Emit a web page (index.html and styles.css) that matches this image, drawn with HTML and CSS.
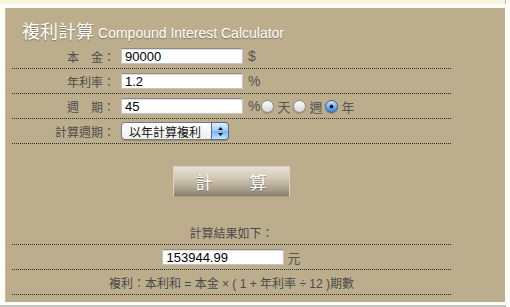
FILE: index.html
```html
<!doctype html>
<html lang="zh-Hant">
  <head>
    <meta charset="UTF-8" />
    <title>複利計算 Compound Interest Calculator</title>
    <link rel="stylesheet" href="styles.css">
  </head>
  <body>
    <div class="strip"></div>

    <div class="panel">
      <h1 class="title">複利計算 <span class="title-en">Compound Interest Calculator</span></h1>

      <div class="form">
        <div class="row">
          <label class="label" for="principal">本　金：</label>
          <div class="field">
            <input class="text" id="principal" type="text" value="90000" />
            <span class="unit">$</span>
          </div>
        </div>

        <div class="row">
          <label class="label" for="rate">年利率：</label>
          <div class="field">
            <input class="text" id="rate" type="text" value="1.2" />
            <span class="unit">%</span>
          </div>
        </div>

        <div class="row">
          <label class="label" for="period">週　期：</label>
          <div class="field">
            <input class="text" id="period" type="text" value="45" />
            <span class="unit">%</span>
            <span class="radios">
              <input class="radio" type="radio" name="unit" /><span class="opt">天</span>
              <input class="radio" type="radio" name="unit" /><span class="opt">週</span>
              <input class="radio" type="radio" name="unit" checked /><span class="opt">年</span>
            </span>
          </div>
        </div>

        <div class="row">
          <label class="label" for="mode">計算週期：</label>
          <div class="field">
            <div class="select">
              <select id="mode">
                <option>以年計算複利</option>
                <option>以月計算複利</option>
              </select>
              <span class="select-btn">
                <svg width="7" height="11" viewBox="0 0 7 11">
                  <path d="M3.5 1 L6 4 L1 4 Z" fill="#111" />
                  <path d="M3.5 10 L6 7 L1 7 Z" fill="#111" />
                </svg>
              </span>
            </div>
          </div>
        </div>

        <div class="actions">
          <button class="calc" type="button">計　　算</button>
        </div>

        <div class="row center">計算結果如下：</div>
        <div class="row center">
          <input class="text" type="text" value="153944.99" />
          <span class="unit">元</span>
        </div>
        <div class="row center">複利：本利和 = 本金 × ( 1 + 年利率 ÷ 12 )期數</div>
      </div>
    </div>

    <div class="foot"></div>
  </body>
</html>
```

FILE: styles.css
```css
* {
  margin: 0;
  padding: 0;
  box-sizing: border-box;
}

body {
  background: #fdfdf8;
  font-family: "Liberation Sans", "Noto Sans CJK TC", sans-serif;
  font-size: 12px;
  color: #4a4a4a;
  width: 510px;
}

.strip {
  width: 506px;
  height: 4px;
  background: #faf5dc;
  border-right: 1px solid #b8b8b8;
}

.panel {
  margin: 4px 0 0 5px;
  width: 500px;
  height: 294px;
  background: #bcad8c;
  padding: 0 6px;
  border-left: 1px solid #c9bd9f;
}

.title {
  height: 36px;
  padding: 10px 0 0 10px;
  font-family: "Noto Sans CJK TC", sans-serif;
  font-size: 18px;
  font-weight: normal;
  line-height: 24px;
  color: #fff;
  text-shadow: 0 1px 1px rgba(60, 50, 30, 0.45);
}

.title-en {
  font-family: "Liberation Sans", sans-serif;
  font-size: 14px;
}

.form {
  width: 439px;
}

.row {
  display: grid;
  grid-template-columns: 103px auto;
  align-items: center;
  height: 25px;
  border-bottom: 1px dotted #2a2a2a;
}

.label {
  font-family: "Noto Sans CJK TC", sans-serif;
  text-align: right;
  color: #4d4d4d;
}

.field {
  display: flex;
  align-items: center;
  padding-left: 6px;
}

.text {
  width: 122px;
  height: 16px;
  border: 1px solid #c4c4c4;
  border-top-color: #8a8a8a;
  box-shadow: inset 0 1px 1px rgba(0, 0, 0, 0.15);
  background: #fff;
  padding: 0 3px;
  font-family: "Liberation Sans", sans-serif;
  font-size: 13px;
  color: #000;
  outline: none;
}

.unit {
  margin-left: 5px;
  font-size: 14px;
  color: #555;
}

.radios {
  display: flex;
  align-items: center;
  margin-left: 1px;
}

.radio {
  appearance: none;
  width: 13px;
  height: 13px;
  border-radius: 50%;
  border: 1px solid #8a8a8a;
  background: linear-gradient(#ffffff, #d4d4d4);
  box-shadow: 0 1px 1px rgba(0, 0, 0, 0.2);
}

.radio:checked {
  border-color: #3a5f94;
  background:
    radial-gradient(circle, #1a1a1a 0 1.6px, transparent 2.2px),
    linear-gradient(#cfe6fb, #6aaef0 55%, #3a86dc);
}

.opt {
  margin: 0 3px 0 3px;
  font-family: "Noto Sans CJK TC", sans-serif;
  font-size: 13px;
  color: #555;
}

.select {
  position: relative;
  width: 108px;
  height: 18px;
}

.select select {
  appearance: none;
  width: 100%;
  height: 18px;
  border: 1px solid #7a7a7a;
  border-radius: 4px;
  background: linear-gradient(#ffffff, #eeeeee);
  padding-left: 7px;
  font-family: "Noto Sans CJK TC", sans-serif;
  font-size: 12px;
  color: #111;
  box-shadow: 0 1px 1px rgba(0, 0, 0, 0.2);
}

.select-btn {
  position: absolute;
  right: 0;
  top: 0;
  width: 18px;
  height: 18px;
  border: 1px solid #4c6f9f;
  border-radius: 0 4px 4px 0;
  background: linear-gradient(#e2f0fc, #9fcdf6 50%, #6fb3f0 51%, #c5e6ff);
  display: flex;
  align-items: center;
  justify-content: center;
}

.actions {
  display: flex;
  justify-content: center;
  padding: 22px 0 23px;
}

.calc {
  width: 117px;
  height: 31px;
  border: 1px solid #d9d1c1;
  border-bottom-color: #a79d8a;
  background: linear-gradient(#e8e2d5, #d3cab8 35%, #aca28f 75%, #867c6a);
  font-family: "Noto Sans CJK TC", sans-serif;
  font-size: 17px;
  letter-spacing: 1px;
  color: #fff;
  text-shadow: 0 1px 1px rgba(70, 60, 40, 0.5);
  cursor: pointer;
}

.row.center {
  display: flex;
  justify-content: center;
  font-family: "Liberation Sans", "Noto Sans CJK TC", sans-serif;
  font-size: 12px;
  color: #4a4a4a;
}

.row.center .unit {
  margin-left: 3px;
  font-family: "Noto Sans CJK TC", sans-serif;
  font-size: 13px;
}

.foot {
  width: 506px;
  height: 2px;
  margin-top: 3px;
  background: #c2c2c2;
}
```
